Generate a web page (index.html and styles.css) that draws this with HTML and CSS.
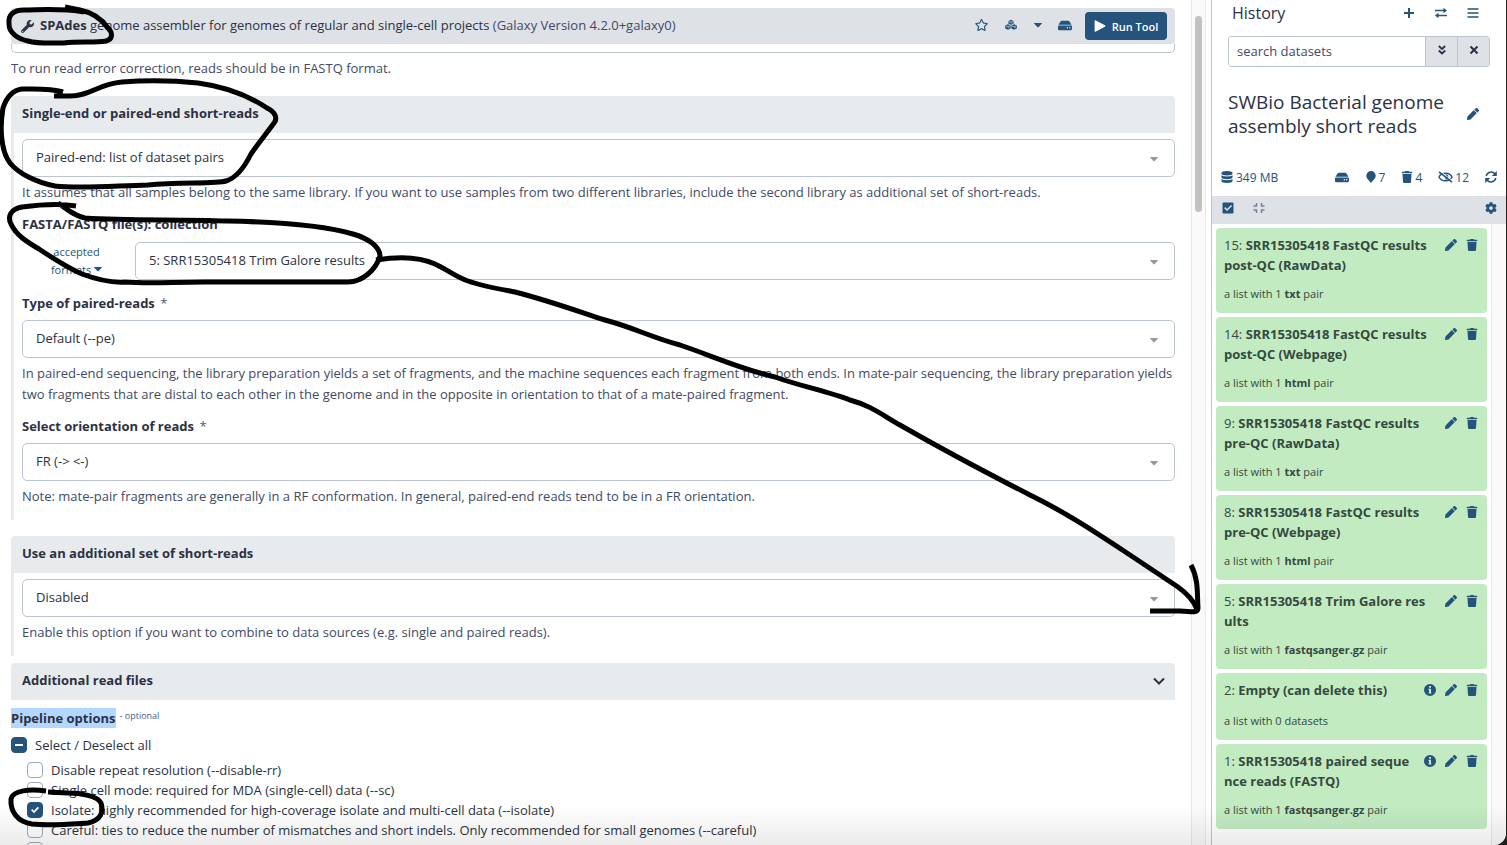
FILE: index.html
```html
<!DOCTYPE html>
<html lang="en">
<head>
<meta charset="utf-8">
<title>Galaxy - SPAdes</title>
<link rel="stylesheet" href="styles.css">
</head>
<body>
<svg class="sprite" aria-hidden="true">
  <symbol id="wrench" viewBox="0 0 512 512"><path d="M507.73 109.1c-2.24-9.03-13.54-12.09-20.12-5.51l-74.36 74.36-67.88-11.31-11.31-67.88 74.36-74.36c6.62-6.62 3.43-17.9-5.66-20.16-47.38-11.74-99.55.91-136.58 37.93-39.64 39.64-50.55 97.1-34.05 147.2L18.74 402.76c-24.99 24.99-24.99 65.51 0 90.5 24.99 24.99 65.51 24.99 90.5 0l213.21-213.21c50.12 16.71 107.47 5.68 147.37-34.22 37.07-37.07 49.7-89.32 37.91-136.73zM64 472c-13.25 0-24-10.75-24-24 0-13.26 10.75-24 24-24s24 10.74 24 24c0 13.25-10.75 24-24 24z"/></symbol>
  <symbol id="star" viewBox="0 0 576 512"><path d="M528.1 171.5L382 150.2 316.7 17.8c-11.7-23.6-45.6-23.9-57.4 0L194 150.2 47.9 171.5c-26.2 3.8-36.7 36.1-17.7 54.6l105.7 103-25 145.5c-4.5 26.3 23.2 46 46.4 33.7L288 439.6l130.7 68.7c23.2 12.2 50.9-7.4 46.4-33.7l-25-145.5 105.7-103c19-18.5 8.5-50.8-17.7-54.6zM388.6 312.3l23.7 138.4L288 385.4l-124.3 65.3 23.7-138.4-100.6-98 139-20.2 62.2-126 62.2 126 139 20.2-100.6 98z"/></symbol>
  <symbol id="cubes" viewBox="0 0 14 12"><path d="M7 0l3 1.2v3.2L7 5.8 4 4.4V1.2zM3.4 5.2l3.2 1.3v3.6L3.4 11.6.2 10.1V6.5zM10.6 5.2l3.2 1.3v3.6l-3.2 1.5-3.2-1.5V6.5z"/><path class="cut" d="M4.4 1.7L7 2.8l2.6-1.1M.8 7l2.6 1.1L6 7M8 7l2.6 1.1L13.2 7M8.1 3.2v1.2M4.6 8.6v1.4M11.8 8.6v1.4"/></symbol>
  <symbol id="hdd" viewBox="0 0 576 512"><path d="M576 304v96c0 26.51-21.49 48-48 48H48c-26.51 0-48-21.49-48-48v-96c0-26.51 21.49-48 48-48h480c26.51 0 48 21.49 48 48zm-48-80a79.557 79.557 0 0 1 30.777 6.165L462.25 85.374A48.003 48.003 0 0 0 422.311 64H153.689a48 48 0 0 0-39.938 21.374L17.223 230.165A79.557 79.557 0 0 1 48 224h480zm-48 96c-17.673 0-32 14.327-32 32s14.327 32 32 32 32-14.327 32-32-14.327-32-32-32zm-96 0c-17.673 0-32 14.327-32 32s14.327 32 32 32 32-14.327 32-32-14.327-32-32-32z"/></symbol>
  <symbol id="play" viewBox="0 0 12 12"><path d="M.6 1.1v9.8c0 .8.6 1.1 1.3.7l9-4.9c.7-.4.7-1 0-1.4l-9-4.9C1.200 0 .6.300.6 1.100z"/></symbol>
  <symbol id="caret" viewBox="0 0 8 5"><path d="M.3 0h7.4c.3 0 .4.300.2.5L4.400 4.300c-.2.2-.6.2-.8 0L.1.5C-.1.300 0 0 .3 0z"/></symbol>
  <symbol id="chevron" viewBox="0 0 12 12"><path class="line" d="M1 3.500L6 8.500l5-5"/></symbol>
  <symbol id="plus" viewBox="0 0 12 12"><path class="line" d="M6 1v10M1 6h10"/></symbol>
  <symbol id="swap" viewBox="0 0 12 12"><path class="thin" d="M0 3.500h9M12 8.500H3"/><path d="M8.500.8L12 3.500 8.500 6.200zM3.500 5.800L0 8.500l3.500 2.700z"/></symbol>
  <symbol id="bars" viewBox="0 0 12 12"><path class="thin" d="M.5 2h11M.5 6h11M.5 10h11"/></symbol>
  <symbol id="double" viewBox="0 0 10 10"><path class="bold" d="M1.800 1L5 4l3.200-3M1.800 5.500l3.200 3 3.200-3"/></symbol>
  <symbol id="times" viewBox="0 0 10 10"><path class="line" d="M1.500 1.500l7 7M8.500 1.500l-7 7"/></symbol>
  <symbol id="pencil" viewBox="0 0 512 512"><path d="M497.9 142.1l-46.1 46.1c-4.7 4.7-12.3 4.7-17 0l-111-111c-4.7-4.7-4.7-12.3 0-17l46.1-46.1c18.7-18.7 49.1-18.7 67.9 0l60.1 60.1c18.8 18.7 18.8 49.1 0 67.9zM284.2 99.8L21.6 362.4.4 483.9c-2.9 16.4 11.4 30.6 27.8 27.8l121.5-21.3 262.6-262.6c4.7-4.7 4.7-12.3 0-17l-111-111c-4.8-4.7-12.4-4.7-17.1 0z"/></symbol>
  <symbol id="trash" viewBox="0 0 448 512"><path d="M432 32H312l-9.4-18.7A24 24 0 0 0 281.1 0H166.8a23.72 23.72 0 0 0-21.4 13.3L136 32H16A16 16 0 0 0 0 48v32a16 16 0 0 0 16 16h416a16 16 0 0 0 16-16V48a16 16 0 0 0-16-16zM32 128l21.200 339a48 48 0 0 0 47.900 45h245.800a48 48 0 0 0 47.900-45L416 128z"/></symbol>
  <symbol id="info" viewBox="0 0 12 12"><path fill-rule="evenodd" d="M6 0a6 6 0 1 1 0 12A6 6 0 0 1 6 0zM5 2v1.800h2V2zM4.500 4.800v1.100H5v2.600h-.5v1.100h3V8.500H7V4.800z"/></symbol>
  <symbol id="database" viewBox="0 0 11 12"><path d="M5.500 0C8.500 0 11 .8 11 1.800v1C11 3.700 8.500 4.400 5.500 4.400S0 3.700 0 2.800v-1C0 .8 2.500 0 5.500 0zM0 4.200c1 .8 3 1.200 5.500 1.200S10 5 11 4.200v2.400c0 .9-2.500 1.600-5.500 1.600S0 7.500 0 6.600zM0 8c1 .8 3 1.200 5.500 1.200S10 8.800 11 8v2.300c0 1-2.500 1.700-5.500 1.700S0 11.300 0 10.300z"/></symbol>
  <symbol id="marker" viewBox="0 0 10 12"><path d="M5 0a4.700 4.700 0 0 1 4.700 4.700C9.700 7.500 6.500 9.500 5 12 3.500 9.500.3 7.500.3 4.700A4.700 4.700 0 0 1 5 0z"/></symbol>
  <symbol id="hidden" viewBox="0 0 15 12"><path class="thin" d="M1 6c2.500-5 10.500-5 13 0-2.500 5-10.500 5-13 0z"/><path d="M7.500 3.200a2.800 2.800 0 1 1 0 5.600V6z"/><path class="gap" d="M2.200 .2l12.400 9.800"/><path class="thin" d="M1 .8l13 10.400"/></symbol>
  <symbol id="sync" viewBox="0 0 12 12"><path class="thin" d="M1.200 5A5 5 0 0 1 10 3M10.800 7A5 5 0 0 1 2 9"/><path d="M11.800 0v5H6.800zM.2 12V7h5z"/></symbol>
  <symbol id="checksq" viewBox="0 0 12 12"><path fill-rule="evenodd" d="M1.300.5h9.400c.5 0 .8.300.8.8v9.400c0 .5-.3.8-.8.8H1.300c-.5 0-.8-.3-.8-.8V1.300c0-.5.300-.8.8-.8zM2.200 6.200l2.900 2.900 5-5-1.100-1.100-3.900 3.900-1.800-1.800z"/></symbol>
  <symbol id="compress" viewBox="0 0 12 12"><path class="thin" d="M3.500 1v3H.5M8.500 1v3h3M3.500 11V8H.5M8.500 11V8h3"/></symbol>
  <symbol id="cog" viewBox="0 0 512 512"><path d="M487.4 315.7l-42.6-24.6c4.3-23.2 4.3-47 0-70.2l42.6-24.6c4.9-2.8 7.1-8.6 5.5-14-11.1-35.6-30-67.8-54.7-94.6-3.8-4.1-10-5.1-14.8-2.3L380.8 110c-17.9-15.4-38.5-27.3-60.8-35.1V25.800c0-5.6-3.9-10.5-9.4-11.7-36.7-8.2-74.3-7.8-109.2 0-5.5 1.200-9.4 6.100-9.4 11.700V75c-22.2 7.900-42.8 19.800-60.8 35.100L88.700 85.500c-4.9-2.8-11-1.9-14.800 2.300-24.7 26.700-43.6 58.900-54.7 94.600-1.7 5.400.6 11.200 5.500 14L67.300 221c-4.3 23.200-4.300 47 0 70.200l-42.600 24.600c-4.900 2.800-7.100 8.600-5.500 14 11.100 35.600 30 67.800 54.700 94.600 3.800 4.100 10 5.100 14.800 2.300l42.600-24.600c17.900 15.400 38.500 27.300 60.800 35.100v49.200c0 5.600 3.900 10.500 9.400 11.700 36.700 8.200 74.300 7.800 109.200 0 5.500-1.200 9.400-6.100 9.400-11.700v-49.200c22.200-7.900 42.800-19.800 60.800-35.100l42.600 24.600c4.900 2.800 11 1.900 14.800-2.300 24.700-26.700 43.600-58.900 54.700-94.600 1.500-5.500-.7-11.300-5.600-14.100zM256 336c-44.1 0-80-35.9-80-80s35.900-80 80-80 80 35.900 80 80-35.900 80-80 80z"/></symbol>
</svg>

<div class="app">
  <main class="center">
    <header class="tool-bar">
      <svg class="icon dark"><use href="#wrench"/></svg>
      <h1 class="tool-title"><b>SPAdes</b> genome assembler for genomes of regular and single-cell projects <span class="muted">(Galaxy Version 4.2.0+galaxy0)</span></h1>
      <button class="tool-icon" aria-label="Add to favorites"><svg class="icon wide"><use href="#star"/></svg></button>
      <button class="tool-icon" aria-label="Versions"><svg class="icon"><use href="#cubes"/></svg></button>
      <button class="tool-icon narrow" aria-label="Options"><svg class="caret"><use href="#caret"/></svg></button>
      <button class="tool-icon" aria-label="Storage"><svg class="icon drive"><use href="#hdd"/></svg></button>
      <button class="run"><svg class="icon"><use href="#play"/></svg>Run Tool</button>
    </header>
    <div class="clipped-field"></div>
    <p class="help intro">To run read error correction, reads should be in FASTQ format.</p>

    <section class="section">
      <h2 class="section-head"><label for="reads">Single-end or paired-end short-reads</label></h2>
      <div class="section-body">
        <div class="select"><select id="reads"><option>Paired-end: list of dataset pairs</option></select><svg class="arrow"><use href="#caret"/></svg></div>
        <p class="help">It assumes that all samples belong to the same library. If you want to use samples from two different libraries, include the second library as additional set of short-reads.</p>
        <label class="label" for="collection">FASTA/FASTQ file(s): collection</label>
        <div class="data-row">
          <button class="formats">accepted<br>formats <svg class="caret"><use href="#caret"/></svg></button>
          <div class="select"><select id="collection"><option>5: SRR15305418 Trim Galore results</option></select><svg class="arrow"><use href="#caret"/></svg></div>
        </div>
        <label class="label" for="type">Type of paired-reads <span class="star">*</span></label>
        <div class="select"><select id="type"><option>Default (--pe)</option></select><svg class="arrow"><use href="#caret"/></svg></div>
        <p class="help">In paired-end sequencing, the library preparation yields a set of fragments, and the machine sequences each fragment from both ends. In mate-pair sequencing, the library preparation yields two fragments that are distal to each other in the genome and in the opposite in orientation to that of a mate-paired fragment.</p>
        <label class="label" for="orient">Select orientation of reads <span class="star">*</span></label>
        <div class="select"><select id="orient"><option>FR (-&gt; &lt;-)</option></select><svg class="arrow"><use href="#caret"/></svg></div>
        <p class="help">Note: mate-pair fragments are generally in a RF conformation. In general, paired-end reads tend to be in a FR orientation.</p>
      </div>
    </section>

    <section class="section">
      <h2 class="section-head"><label for="extra">Use an additional set of short-reads</label></h2>
      <div class="section-body">
        <div class="select"><select id="extra"><option>Disabled</option></select><svg class="arrow"><use href="#caret"/></svg></div>
        <p class="help">Enable this option if you want to combine to data sources (e.g. single and paired reads).</p>
      </div>
    </section>

    <section class="section compact">
      <h2 class="section-head">Additional read files<svg class="icon"><use href="#chevron"/></svg></h2>
    </section>

    <fieldset class="pipeline">
      <legend><mark>Pipeline options</mark><span class="optional">- optional</span></legend>
      <label class="check all"><input type="checkbox" class="mixed" aria-checked="mixed">Select / Deselect all</label>
      <div class="checks">
        <label class="check"><input type="checkbox">Disable repeat resolution (--disable-rr)</label>
        <label class="check"><input type="checkbox">Single cell mode: required for MDA (single-cell) data (--sc)</label>
        <label class="check"><input type="checkbox" checked>Isolate: highly recommended for high-coverage isolate and multi-cell data (--isolate)</label>
        <label class="check"><input type="checkbox">Careful: ties to reduce the number of mismatches and short indels. Only recommended for small genomes (--careful)</label>
        <label class="check"><input type="checkbox" aria-label="More"></label>
      </div>
    </fieldset>
  </main>
  <div class="track"><div class="thumb"></div></div>

  <aside class="history">
    <div class="history-head">
      <h2>History</h2>
      <button aria-label="New history"><svg class="icon"><use href="#plus"/></svg></button>
      <button aria-label="Switch history"><svg class="icon"><use href="#swap"/></svg></button>
      <button aria-label="History options"><svg class="icon"><use href="#bars"/></svg></button>
    </div>
    <div class="search">
      <input type="text" placeholder="search datasets" aria-label="search datasets">
      <button aria-label="Advanced"><svg class="icon"><use href="#double"/></svg></button>
      <button aria-label="Clear"><svg class="icon"><use href="#times"/></svg></button>
    </div>
    <div class="name">
      <h3>SWBio Bacterial genome assembly short reads</h3>
      <button aria-label="Edit name"><svg class="icon"><use href="#pencil"/></svg></button>
    </div>
    <div class="stats">
      <button class="size"><svg class="icon"><use href="#database"/></svg>349 MB</button>
      <button aria-label="Storage"><svg class="icon drive"><use href="#hdd"/></svg></button>
      <button><svg class="icon"><use href="#marker"/></svg>7</button>
      <button><svg class="icon"><use href="#trash"/></svg>4</button>
      <button><svg class="icon wide"><use href="#hidden"/></svg>12</button>
      <button aria-label="Refresh"><svg class="icon"><use href="#sync"/></svg></button>
    </div>
    <div class="operations">
      <button aria-label="Select items"><svg class="icon"><use href="#checksq"/></svg></button>
      <button class="faded" aria-label="Collapse all"><svg class="icon"><use href="#compress"/></svg></button>
      <button class="end" aria-label="Settings"><svg class="icon"><use href="#cog"/></svg></button>
    </div>
    <div class="listing">
      <div class="cards">
        <article class="card"><div class="card-top"><h4>15: <b>SRR15305418 FastQC results post-QC (RawData)</b></h4><button aria-label="Edit"><svg class="icon"><use href="#pencil"/></svg></button><button aria-label="Delete"><svg class="icon"><use href="#trash"/></svg></button></div><p>a list with 1 <b>txt</b> pair</p></article>
        <article class="card"><div class="card-top"><h4>14: <b>SRR15305418 FastQC results post-QC (Webpage)</b></h4><button aria-label="Edit"><svg class="icon"><use href="#pencil"/></svg></button><button aria-label="Delete"><svg class="icon"><use href="#trash"/></svg></button></div><p>a list with 1 <b>html</b> pair</p></article>
        <article class="card"><div class="card-top"><h4>9: <b>SRR15305418 FastQC results pre-QC (RawData)</b></h4><button aria-label="Edit"><svg class="icon"><use href="#pencil"/></svg></button><button aria-label="Delete"><svg class="icon"><use href="#trash"/></svg></button></div><p>a list with 1 <b>txt</b> pair</p></article>
        <article class="card"><div class="card-top"><h4>8: <b>SRR15305418 FastQC results pre-QC (Webpage)</b></h4><button aria-label="Edit"><svg class="icon"><use href="#pencil"/></svg></button><button aria-label="Delete"><svg class="icon"><use href="#trash"/></svg></button></div><p>a list with 1 <b>html</b> pair</p></article>
        <article class="card"><div class="card-top"><h4>5: <b>SRR15305418 Trim Galore res<br>ults</b></h4><button aria-label="Edit"><svg class="icon"><use href="#pencil"/></svg></button><button aria-label="Delete"><svg class="icon"><use href="#trash"/></svg></button></div><p>a list with 1 <b>fastqsanger.gz</b> pair</p></article>
        <article class="card"><div class="card-top"><h4>2: <b>Empty (can delete this)</b></h4><button aria-label="Info"><svg class="icon"><use href="#info"/></svg></button><button aria-label="Edit"><svg class="icon"><use href="#pencil"/></svg></button><button aria-label="Delete"><svg class="icon"><use href="#trash"/></svg></button></div><p>a list with 0 datasets</p></article>
        <article class="card"><div class="card-top"><h4>1: <b>SRR15305418 paired seque<br>nce reads (FASTQ)</b></h4><button aria-label="Info"><svg class="icon"><use href="#info"/></svg></button><button aria-label="Edit"><svg class="icon"><use href="#pencil"/></svg></button><button aria-label="Delete"><svg class="icon"><use href="#trash"/></svg></button></div><p>a list with 1 <b>fastqsanger.gz</b> pair</p></article>
      </div>
      <div class="list-track"></div>
    </div>
  </aside>
</div>
<div class="shade"></div>

<svg class="ink" viewBox="0 0 1507 845" aria-hidden="true">
  <path d="M84 12C60 8 40 10 24 10C13 10 8 15 9 24C9 33 18 39 28 41C38 44 52 43 64 43C78 41 95 43 106 41C113 39 113 33 108 28C101 18 90 12 80 10L65 7"/>
  <path d="M54 96H70C90 96 98 84 122 82C150 80 178 81 198 83C228 87 252 98 267 108C275 112 278 118 274 123C266 134 257 145 251 154C244 168 236 178 226 181C216 184 180 182 148 185C112 186 78 189 55 186C35 182 18 173 10 163C0 150 0 125 3 108C7 96 13 90 22 89C35 89 50 88 63 92"/>
  <path d="M76 206C58 203 37 205 22 207C11 209 7 216 11 224C16 235 27 242 39 249C54 259 68 268 82 274C98 280 110 283 125 282C150 284 170 282 205 282H348C362 282 376 270 380 256C380 246 367 238 353 234C322 225 280 222 227 221C176 219 130 221 85 218C75 216 68 210 58 203"/>
  <path d="M376 260C400 256 420 257 435 264C448 270 456 277 468 281C482 286 494 288 515 292C550 301 580 312 605 320C635 328 650 337 680 345C710 355 740 369 775 377C800 386 830 392 850 400C872 406 882 415 900 425C940 448 985 472 1030 495C1065 512 1095 532 1130 555L1178 587Q1192 597 1197 609"/>
  <path d="M1191 565C1199 580 1197 596 1198 608C1198 614 1190 611 1180 611H1150"/>
  <path d="M46 791C30 789 13 790 11 799C10 812 18 822 32 824C50 826 72 824 88 823C101 820 104 812 101 803C98 796 80 793 68 793L48 792"/>
</svg>
</body>
</html>
```
FILE: styles.css
```css
* { box-sizing: border-box; }
html, body { height: 100%; margin: 0; overflow: hidden; }
body { font-family: "Open Sans", "Noto Sans", sans-serif; font-size: 13px; line-height: 21px; color: #2c3143; background: #22211f; }
h1, h2, h3, h4, p { margin: 0; font-size: inherit; font-weight: inherit; }
b { font-weight: 700; }
button { display: inline-flex; align-items: center; justify-content: center; padding: 0; border: 0; background: none; color: #25537b; font: inherit; }
.sprite { display: none; }
.icon { width: 12px; height: 12px; flex: none; fill: currentColor; }
.icon.wide { width: 15px; }
.icon.drive { width: 14px; height: 13px; }
.icon.dark { color: #2c3143; width: 13px; height: 13px; }
.caret { width: 8px; height: 5px; fill: currentColor; }
.line { fill: none; stroke: currentColor; stroke-width: 2; }
.bold { fill: none; stroke: currentColor; stroke-width: 1.8; }
.thin { fill: none; stroke: currentColor; stroke-width: 1.5; }
.cut { fill: none; stroke: #dee1e6; stroke-width: 0.8; }
.gap { fill: none; stroke: #fff; stroke-width: 1; }
.app { display: flex; height: 100vh; margin-right: 1px; background: #fff; border-radius: 0 0 12px 0; overflow: hidden; }

.center { flex: 1; min-width: 0; overflow: hidden; padding: 8px 16px 0 11px; }
.tool-bar { display: flex; align-items: center; height: 36px; padding: 0 8px 0 10px; background: #dee1e6; border-radius: 4px; }
.tool-title { flex: 1; margin-left: 6px; padding-bottom: 2px; white-space: nowrap; }
.muted { color: #424a66; }
.tool-icon { width: 30px; height: 28px; padding-bottom: 2px; }
.tool-icon.narrow { width: 24px; }
.run { gap: 6px; height: 28px; width: 82px; margin-left: 5px; border-radius: 4px; background: #25537b; color: #fff; font-size: 11px; font-weight: 600; }
.clipped-field { height: 9px; border: 1px solid #bdc6d0; border-top: 0; border-radius: 0 0 5px 5px; }
.help { margin-top: 5px; color: #424a66; }
.help.intro { margin: 5px 0 17px; }

.section { margin-bottom: 16px; }
.section-head { display: flex; align-items: center; justify-content: space-between; height: 37px; padding: 0 10px 2px 11px; background: #e8ebee; border-radius: 4px 4px 0 0; font-weight: 700; }
.section-body { padding: 6px 0 13px 8px; border-left: 3px solid #e8ebee; }
.section:has(+ .compact) { margin-bottom: 7px; }
.section.compact { margin-bottom: 8px; }
.label { display: block; margin: 11px 0 6px; font-weight: 700; }
.star { margin-left: 2px; color: #4a5a85; font-weight: 400; }
.select { display: grid; align-items: center; flex: 1; }
.select select { grid-area: 1 / 1; width: 100%; height: 38px; padding: 0 13px 2px; appearance: none; border: 1px solid #bdc6d0; border-radius: 5px; background: #fff; color: #2c3143; font: inherit; }
.arrow { grid-area: 1 / 1; justify-self: end; width: 10px; height: 5px; margin: 2px 16px 0 0; fill: #999; pointer-events: none; }
.data-row { display: flex; padding: 1px 0 2px; }
.formats { display: block; width: 113px; padding-right: 4px; font-size: 11px; line-height: 18px; text-align: center; }
.formats .caret { vertical-align: 2px; }

.pipeline { margin: 0; padding: 0; border: 0; }
.pipeline legend { display: flex; padding: 0; line-height: 20px; font-weight: 700; }
mark { background: #b4d7ff; color: inherit; }
.optional { margin-left: 4px; font-size: 9px; line-height: 16px; font-weight: 400; color: #4a5a85; }
.check { display: flex; align-items: center; gap: 8px; height: 20px; }
.check.all { margin: 7px 0 5px; }
.checks { padding-left: 16px; }
.check input { appearance: none; flex: none; display: grid; place-items: center; width: 16px; height: 16px; margin: 0; border: 1px solid #9aa9bb; border-radius: 4px; background: #fff; }
.check input:checked, .check input.mixed { border-color: #25537b; background: #25537b; }
.check input:checked::before { content: ""; width: 8px; height: 8px; background: #fff; clip-path: polygon(0 52%, 16% 36%, 38% 58%, 84% 10%, 100% 26%, 38% 90%); }
.check input.mixed::before { content: ""; width: 8px; height: 2px; background: #fff; }

.track { width: 15px; margin-right: 5px; padding: 16px 3px; background: #fafafa; border: solid #e8e8e8; border-width: 0 1px; }
.thumb { height: 196px; border-radius: 4px; background: #c1c1c1; }

.history { display: flex; flex-direction: column; width: 295px; border-left: 1px solid #bdc6d0; }
.history-head { display: flex; align-items: center; height: 26px; padding: 0 17px 0 20px; }
.history-head h2 { flex: 1; font-size: 16px; }
.history-head button { width: 32px; }
.search { display: flex; height: 31px; margin: 10px 16px 0; border: 1px solid #bdc6d0; border-radius: 3px; overflow: hidden; }
.search input { flex: 1; min-width: 0; padding: 0 8px; border: 0; color: #424a66; font: inherit; }
.search input::placeholder { color: #424a66; opacity: 1; }
.search button { width: 32px; padding-bottom: 3px; border-left: 1px solid #bdc6d0; background: #dee1e6; color: #2c3143; }
.search .icon { width: 10px; height: 10px; }
.name { display: flex; align-items: center; margin: 23px 27px 0 16px; }
.name h3 { flex: 1; font-size: 19px; line-height: 24px; }
.stats { display: flex; align-items: center; gap: 16px; height: 38px; margin-top: 20px; padding: 0 9px; font-size: 12px; }
.stats button { gap: 2px; }
.stats .size { margin-right: auto; gap: 3px; }
.operations { display: flex; align-items: center; gap: 19px; height: 28px; padding: 0 9px 4px 10px; background: #dee1e6; }
.operations .faded { color: #76809a; }
.operations .end { margin-left: auto; }
.listing { display: flex; flex: 1; min-height: 0; overflow: hidden; }
.cards { flex: 1; display: flex; flex-direction: column; gap: 4px; padding: 4px; }
.list-track { width: 15px; border-left: 1px solid #e8e8e8; background: #fafafa; }
.card { flex: none; padding: 7px 9px 10px 8px; border-radius: 4px; background: #c2ebc2; color: #36493f; }
.card-top { display: flex; align-items: flex-start; gap: 9px; min-height: 22px; }
.card h4 { flex: 1; line-height: 20px; }
.card button { width: 12px; height: 20px; }
.card p { margin-top: 9px; line-height: 19px; font-size: 11px; }

.shade { position: absolute; inset: auto 0 0; height: 40px; background: linear-gradient(rgba(0,0,0,0), rgba(0,0,0,0.08)); pointer-events: none; }
.ink { position: absolute; top: 0; left: 0; width: 1507px; height: 845px; fill: none; stroke: #000; stroke-width: 5; stroke-linejoin: round; pointer-events: none; }
```
